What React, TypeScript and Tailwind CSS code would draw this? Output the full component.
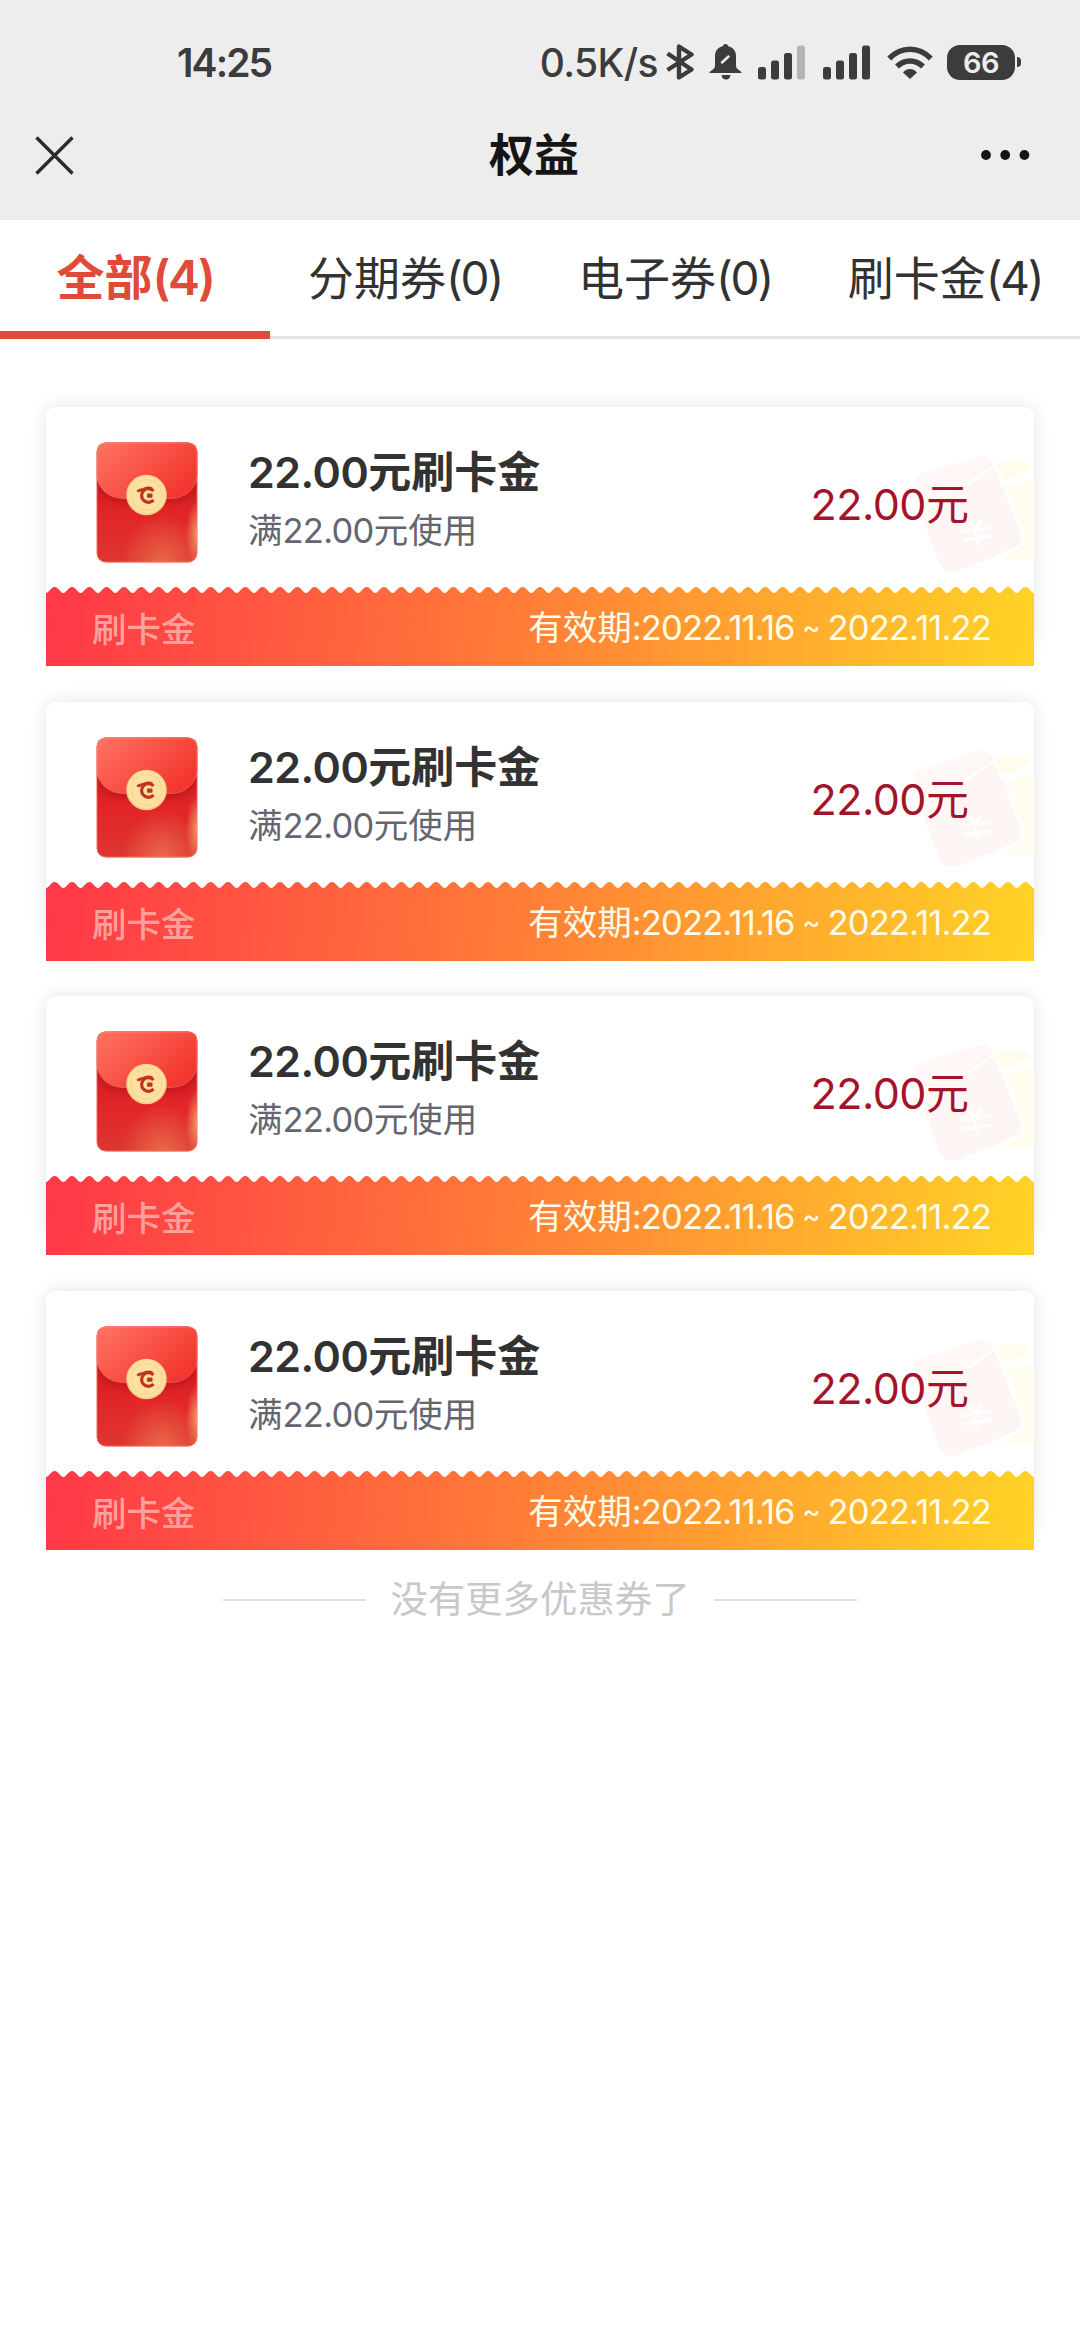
import clsx from "clsx";

const tabs = [
  { label: "全部", count: 4, active: true },
  { label: "分期券", count: 0, active: false },
  { label: "电子券", count: 0, active: false },
  { label: "刷卡金", count: 4, active: false },
];

const coupons = [1, 2, 3, 4].map((id) => ({
  id,
  type: "刷卡金",
  amount: "22.00",
  start: "2022.11.16",
  end: "2022.11.22",
}));

const Signal: React.FC<{ weak?: boolean }> = ({ weak }) => (
  <svg width="48" height="35" viewBox="0 0 48 35" fill="#3c3c3c">
    <rect x="0" y="22" width="8" height="12.5" rx="2.5" />
    <rect x="13" y="15.5" width="8" height="19" rx="2.5" />
    <rect x="26" y="8" width="8" height="26.5" rx="2.5" />
    <rect x="39" y="0.5" width="8" height="34" rx="2.5" fill={weak ? "#b4b4b4" : "#3c3c3c"} />
  </svg>
);

const StatusBar: React.FC = () => {
  return (
    <div className="flex h-[124px] items-center pr-[59px] pl-[177px] text-[#3c3c3c]">
      <span className="text-[39px] leading-none font-semibold tracking-[-1.9px]">14:25</span>
      <div className="ml-auto flex items-center">
        <span className="text-[39px] leading-none font-medium tracking-[-0.6px]">0.5K/s</span>
        <svg className="ml-[8px]" width="28" height="36" viewBox="0 0 28 36" fill="none" stroke="#3c3c3c" strokeWidth="4.4" strokeLinejoin="round">
          <path d="M1.5 9.5 25.5 25.5 13 33.5V2.5L25.5 10.5 1.5 26" />
        </svg>
        <svg className="ml-[15px]" width="33" height="36" viewBox="0 0 33 36">
          <path
            d="M16.5 0c1.6 0 2.4 1 2.6 2.2C24.3 3.3 27 7 27 12v9.5c0 2.5 1.5 3.5 3.5 5 1.3 1 2.3 1.6 2 2.5H.5c-.3-.9.7-1.5 2-2.5 2-1.5 3.5-2.5 3.5-5V12c0-5 2.7-8.7 7.9-9.8C14.1 1 14.9 0 16.5 0z"
            fill="#3c3c3c"
          />
          <path d="M12.5 31h9c-.5 3-2 4.5-4.5 4.5S13 34 12.5 31z" fill="#3c3c3c" />
          <path d="M13 18.5 19.5 12.5" stroke="#ededed" strokeWidth="2.5" strokeLinecap="round" />
        </svg>
        <span className="ml-[16px]"><Signal weak /></span>
        <span className="ml-[17px]"><Signal /></span>
        <svg className="ml-[16px]" width="46" height="35" viewBox="0 0 46 35" fill="none" stroke="#3c3c3c" strokeWidth="5.5">
          <path d="M2.2 13.5C14.5 1.2 31.5 1.2 43.8 13.5" />
          <path d="M10 21.5c7.5-7.5 18.5-7.5 26 0" />
          <path d="M16 27.5c4-4.6 10-4.6 14 0L23 34z" fill="#3c3c3c" stroke="none" />
        </svg>
        <div className="ml-[14px] flex h-[35px] w-[68px] items-center justify-center rounded-[13px] bg-[#3c3c3c] text-[29px] leading-none font-semibold tracking-[-0.5px] text-[#ededed]">
          66
        </div>
        <div className="ml-[2px] h-[10px] w-[4px] rounded-r-full bg-[#3c3c3c]" />
      </div>
    </div>
  );
};

const TitleBar: React.FC = () => {
  return (
    <div className="flex h-[96px] items-start justify-between pr-[50px] pl-[35px]">
      <svg className="mt-[12px]" width="39" height="39" viewBox="0 0 39 39" stroke="#2b2b2b" strokeWidth="3.4">
        <path d="M1.5 1.5 37.5 37.5M37.5 1.5 1.5 37.5" />
      </svg>
      <h1 className="mt-[2px] ml-[13px] text-[45px] leading-[60px] font-bold text-[#151515]">权益</h1>
      <svg className="mt-[26px]" width="49" height="10" viewBox="0 0 49 10" fill="#151515">
        <circle cx="5" cy="5" r="4.9" />
        <circle cx="24.2" cy="5" r="4.9" />
        <circle cx="43.4" cy="5" r="4.9" />
      </svg>
    </div>
  );
};

const RedEnvelope: React.FC = () => {
  return (
    <svg className="mt-[35px] ml-[50px] shrink-0" width="102" height="121" viewBox="0 0 102 121">
      <defs>
        <linearGradient id="body" x1="0" y1="0" x2="0" y2="1">
          <stop offset="0.4" stopColor="#d41f25" />
          <stop offset="0.6" stopColor="#e22528" />
          <stop offset="1" stopColor="#de3630" />
        </linearGradient>
        <linearGradient id="flap" x1="0" y1="0" x2="1" y2="0.6">
          <stop offset="0" stopColor="#ff7563" />
          <stop offset="1" stopColor="#f3362f" />
        </linearGradient>
        <radialGradient id="glow" cx="0.65" cy="1" r="0.4">
          <stop offset="0" stopColor="#f08a5c" stopOpacity="0.6" />
          <stop offset="1" stopColor="#f08a5c" stopOpacity="0" />
        </radialGradient>
        <radialGradient id="edge">
          <stop offset="0" stopColor="#f7a06c" stopOpacity="0.9" />
          <stop offset="1" stopColor="#f7a06c" stopOpacity="0" />
        </radialGradient>
        <filter id="soft" x="-20%" y="-20%" width="140%" height="150%">
          <feGaussianBlur stdDeviation="3" />
        </filter>
        <clipPath id="shape">
          <rect x="0.7" y="0.5" width="100.6" height="120" rx="9" />
        </clipPath>
      </defs>
      <g clipPath="url(#shape)">
        <rect width="102" height="121" fill="url(#body)" />
        <rect width="102" height="121" fill="url(#glow)" />
        <ellipse cx="101" cy="92" rx="11" ry="34" fill="url(#edge)" />
        <path d="M0 0H102V30C102 48 90 60 74 60H28C12 60 0 48 0 30z" fill="#a80f16" opacity="0.5" filter="url(#soft)" />
        <path d="M0 0H102V32C100 47 89 56.5 74 56.5H28C13 56.5 2 47 0 32z" fill="url(#flap)" />
        <path d="M0.5 34C3 48 13 56.5 28 56.5H74C89 56.5 99 48 101.5 34" fill="none" stroke="#ff8273" strokeWidth="0.8" opacity="0.6" />
      </g>
      <rect x="1" y="1" width="100" height="119" rx="9" fill="none" stroke="#ff9a86" strokeWidth="0.8" opacity="0.6" />
      <circle cx="50.5" cy="53" r="20.3" fill="#f6cd86" />
      <circle cx="50.5" cy="52.5" r="19" fill="#ffe0a0" />
      <circle cx="50.5" cy="53" r="15.5" fill="none" stroke="#f3cf8c" strokeWidth="0.8" />
      <g fill="none" stroke="#bd3522" strokeWidth="3.2">
        <path d="M57.5 49A6.8 6.8 0 1 0 57.5 58" />
        <path d="M41.5 49.8C43 47.5 45.5 48 47.5 47.3S52 44.6 56 46.8" strokeWidth="3" />
      </g>
      <rect x="51" y="51.5" width="5.5" height="4.2" rx="0.8" fill="#bd3522" />
    </svg>
  );
};

// faded envelopes printed behind the amount
const Watermark: React.FC = () => (
  <svg className="absolute top-[33px] right-0" width="144" height="150" viewBox="0 0 432 450">
    <g strokeLinejoin="round">
      <path d="M318 64 400 62Q420 68 418 88L345 120 322 92z" fill="#fffcee" />
      <path d="M352 138 432 116V358L330 362 398 316Q404 300 392 268z" fill="#fffcf0" />
      <path d="M72 118Q76 108 92 102L258 50Q286 42 304 60L392 268Q404 306 384 322L200 394Q164 404 148 370L100 240z" fill="#fff8f7" />
      <path d="M100 240 228 140 304 66 345 130 395 290Q400 315 384 322L200 394Q164 404 148 370z" fill="#fef4f3" opacity="0.7" />
      <path d="M228 136 312 78M318 84 392 268Q404 306 384 322L320 350M334 130 432 100" fill="none" stroke="#fff" strokeWidth="8" />
      <path d="M236 246 258 268 272 240M216 274 300 262M220 300 304 288M254 268 264 318" fill="none" stroke="#fffdfd" strokeWidth="10" />
    </g>
  </svg>
);

const Scallops: React.FC = () => {
  const bump = "c3.2 0 4.6-6 8.667-6s5.467 6 8.667 6";
  return (
    <svg className="block" width="988" height="6" viewBox="0 0 988 6">
      <path d={`M0 6${bump.repeat(57)}V0H0z`} fill="#fff" />
    </svg>
  );
};

const Coupon: React.FC<{ coupon: (typeof coupons)[number] }> = ({ coupon }) => {
  return (
    <li className="relative mb-[35.67px] h-[259px] before:absolute before:inset-x-0 before:top-0 before:bottom-[20px] before:rounded-t-[10px] before:shadow-[0_0_18px_rgba(0,0,0,0.11)]">
      <div className="relative flex h-[180px] rounded-t-[10px] bg-white">
        <Watermark />
        <RedEnvelope />
        <div className="mt-[40px] ml-[50px]">
          <h2 className="text-[43px] leading-[50px] font-semibold whitespace-nowrap text-[#323233]">
            <span className="tracking-[-0.5px]">{coupon.amount}</span>元{coupon.type}
          </h2>
          <p className="mt-[11px] text-[34.5px] leading-[46px] whitespace-nowrap text-[#646570]">
            满<span className="tracking-[-0.7px]">{coupon.amount}</span>元使用
          </p>
        </div>
        <p className="relative mt-[72px] mr-[65px] ml-auto text-[43px] leading-[50px] whitespace-nowrap text-[#a5132a]">
          <span className="tracking-[-0.5px]">{coupon.amount}</span>元
        </p>
      </div>
      <div className="relative h-[79px] bg-[linear-gradient(97deg,#ff3748_0%,#ff7a38_46%,#ffd426_100%)]">
        <Scallops />
        <div className="flex items-start justify-between pr-[43px] pl-[46px] whitespace-nowrap">
          <span className="mt-[14px] text-[34.5px] leading-[46px] font-medium text-[#ffa09c]">{coupon.type}</span>
          <span className="mt-[12px] text-[34.5px] leading-[46px] text-[#fffbe8]">
            有效期
            <span className="tracking-[-0.85px] [word-spacing:-1px]">
              :{coupon.start} <span className="inline-block -translate-y-[3px] text-[27px] font-medium">~</span> {coupon.end}
            </span>
          </span>
        </div>
      </div>
    </li>
  );
};

const App: React.FC = () => {
  return (
    <div className="h-[2340px] w-[1080px] overflow-hidden bg-white font-[Inter,'Noto_Sans_CJK_SC',sans-serif]">
      <header className="h-[220px] bg-[#ededed]">
        <StatusBar />
        <TitleBar />
      </header>
      <nav className="grid h-[119px] grid-cols-4 border-b-[3px] border-[#e5e5e5]">
        {tabs.map((tab) => (
          <div
            key={tab.label}
            className={clsx(
              "flex h-[119px] justify-center pt-[28px] leading-[60px] whitespace-nowrap",
              tab.active
                ? "border-b-8 border-[#e04a39] text-[48px] font-semibold text-[#e04a39]"
                : "text-[46px] text-[#323233]"
            )}
          >
            {tab.label}
            <span className="tracking-[-2.2px]">({tab.count})</span>
          </div>
        ))}
      </nav>
      <ul className="mt-[68px] px-[46px]">
        {coupons.map((coupon) => (
          <Coupon key={coupon.id} coupon={coupon} />
        ))}
      </ul>
      <div className="mt-[-11px] flex items-center justify-center text-[37.4px] leading-[50px] text-[#c8c8c8]">
        <span className="h-[2px] w-[143px] bg-[#e0e0e0]" />
        <span className="mx-[24px]">没有更多优惠券了</span>
        <span className="h-[2px] w-[143px] bg-[#e0e0e0]" />
      </div>
    </div>
  );
};

export default App;
